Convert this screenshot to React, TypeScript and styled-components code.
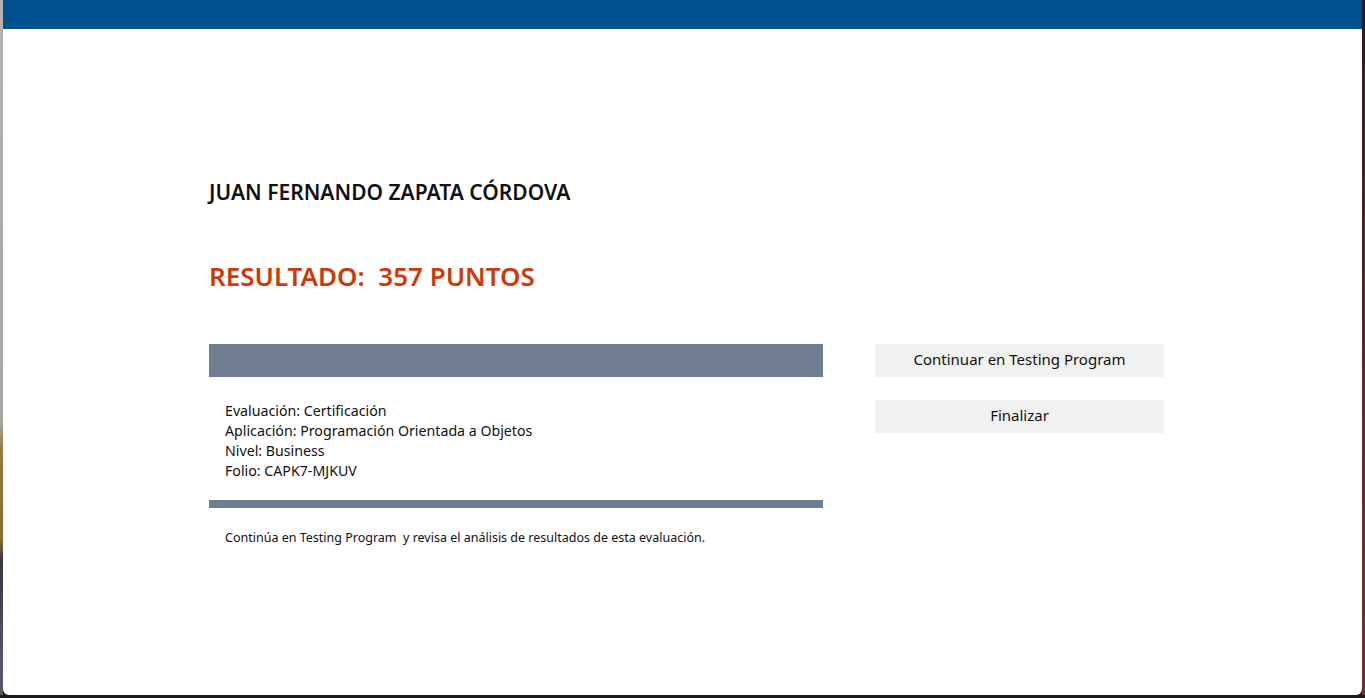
import React from "react";
import styled, { createGlobalStyle } from "styled-components";

const Global = createGlobalStyle`
  html, body { margin: 0; padding: 0; background: #1b1b1b; }
  body { font-family: "Noto Sans", "Open Sans", sans-serif; }
  * { box-sizing: border-box; }
`;

const Desktop = styled.div`
  width: 1365px;
  height: 698px;
  display: flex;
  background: #1b1b1b;
  overflow: hidden;
`;

const LeftEdge = styled.div`
  width: 3px;
  height: 695px;
  flex: none;
  background: linear-gradient(
    to bottom,
    #b4b4b4 0px,
    #a8a6a2 420px,
    #9a7a40 450px,
    #8a6a30 540px,
    #3b3440 560px,
    #565266 650px,
    #5a5868 695px
  );
`;

const RightEdge = styled.div`
  width: 3px;
  height: 695px;
  flex: none;
  background: linear-gradient(to bottom, #3a1420, #6a2434 60%, #7a2a3a);
`;

const Window = styled.div`
  flex: 1;
  height: 695px;
  background: #ffffff;
  border-radius: 0 0 6px 6px;
  display: flex;
  flex-direction: column;
`;

const TopBar = styled.div`
  height: 29px;
  flex: none;
  background: #02518f;
`;

const Content = styled.div`
  padding: 149px 0 0 206px;
  display: flex;
  flex-direction: column;
`;

const Name = styled.h1`
  margin: 0;
  font-size: 21px;
  font-weight: 600;
  line-height: 28px;
  color: #111;
`;

const Result = styled.h2`
  margin: 53px 0 0;
  font-size: 26px;
  font-weight: 600;
  line-height: 34px;
  color: #cc3a08;
  white-space: pre;
`;

const Row = styled.div`
  margin-top: 51px;
  display: flex;
  gap: 52px;
  align-items: flex-start;
`;

const Panel = styled.div`
  width: 614px;
  display: flex;
  flex-direction: column;
`;

const Bar = styled.div<{ $h: number }>`
  height: ${(p) => p.$h}px;
  background: #6e7d91;
`;

const Details = styled.div`
  padding: 24px 16px 19px;
  font-size: 14.2px;
  line-height: 20px;
  color: #111;
`;

const Line = styled.div``;

const Note = styled.p`
  margin: 0;
  padding: 21px 16px 0;
  font-size: 12.5px;
  line-height: 18px;
  color: #111;
  white-space: pre;
`;

const Actions = styled.div`
  width: 289px;
  display: flex;
  flex-direction: column;
  gap: 23px;
`;

const Button = styled.button`
  height: 33px;
  border: none;
  background: #f1f1f1;
  font-family: inherit;
  font-size: 15px;
  color: #111;
  cursor: pointer;
  padding: 0 0 3px;
`;

export default function App() {
  return (
    <>
      <Global />
      <Desktop>
        <LeftEdge />
        <Window>
          <TopBar />
          <Content>
            <Name>JUAN FERNANDO ZAPATA CÓRDOVA</Name>
            <Result>{"RESULTADO:  357 PUNTOS"}</Result>
            <Row>
              <Panel>
                <Bar $h={33} />
                <Details>
                  <Line>Evaluación: Certificación</Line>
                  <Line>Aplicación: Programación Orientada a Objetos</Line>
                  <Line>Nivel: Business</Line>
                  <Line>Folio: CAPK7-MJKUV</Line>
                </Details>
                <Bar $h={8} />
                <Note>{"Continúa en Testing Program  y revisa el análisis de resultados de esta evaluación."}</Note>
              </Panel>
              <Actions>
                <Button>Continuar en Testing Program</Button>
                <Button>Finalizar</Button>
              </Actions>
            </Row>
          </Content>
        </Window>
        <RightEdge />
      </Desktop>
    </>
  );
}
